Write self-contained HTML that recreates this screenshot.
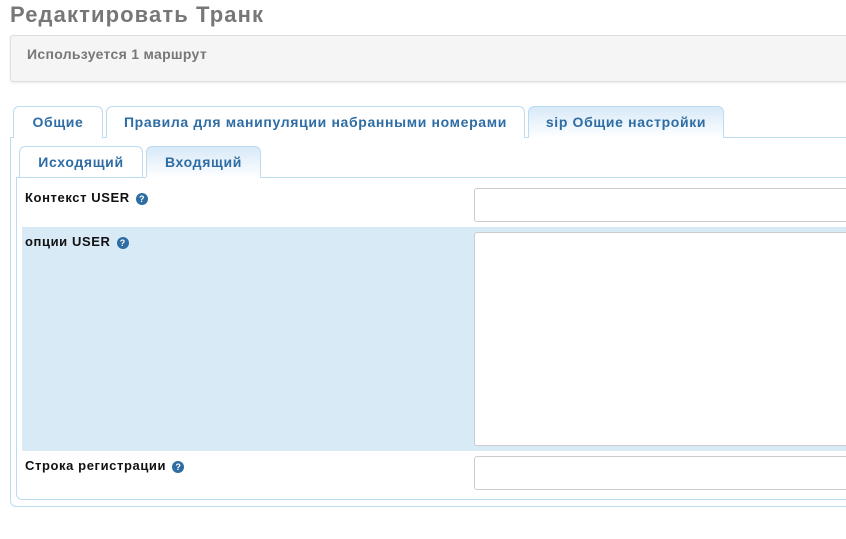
<!DOCTYPE html>
<html><head><meta charset="utf-8"><style>
*{box-sizing:border-box;margin:0;padding:0}
body{width:846px;height:539px;overflow:hidden;background:#fff;font-family:"Liberation Sans",sans-serif;position:relative}
.a{position:absolute}
.title{left:10px;top:2px;font-size:22px;font-weight:bold;color:#777;letter-spacing:1.1px}
.well{left:10px;top:35px;width:850px;height:47px;background:#f5f5f5;border:1px solid #ddd;border-radius:3px;box-shadow:0 1px 2px rgba(0,0,0,.08)}
.well span{position:absolute;left:16px;top:10px;font-size:14px;font-weight:bold;color:#777;letter-spacing:.3px}
.tab{position:absolute;border:1px solid #bcdcf2;border-bottom:none;border-radius:6px 6px 0 0;background:#fff;color:#2e6da4;font-weight:bold;font-size:14px;text-align:center;line-height:31px;letter-spacing:.65px}
.act{background:linear-gradient(#d7e9f8,#fff)}
.panel{position:absolute;border:1px solid #bcdcf2;border-radius:0 0 6px 6px}
.lbl{position:absolute;font-size:13px;font-weight:bold;color:#111;letter-spacing:.6px}
.q{display:inline-block;width:12px;height:12px;border-radius:50%;background:#2e6da4;color:#fff;font-size:9px;line-height:12px;text-align:center;vertical-align:0;margin-left:6px;letter-spacing:0}
.inp{position:absolute;left:474px;width:380px;border:1px solid #ccc;border-radius:3px;background:#fff}
</style></head><body>
<div class="a title">Редактировать Транк</div>
<div class="a well"><span>Используется 1 маршрут</span></div>
<div class="panel" style="left:10px;top:137px;width:850px;height:370px"></div>
<div class="tab" style="left:13px;top:106px;width:90px;height:32px">Общие</div>
<div class="tab" style="left:106px;top:106px;width:419px;height:32px">Правила для манипуляции набранными номерами</div>
<div class="tab act" style="left:528px;top:106px;width:196px;height:32px">sip Общие настройки</div>
<div class="panel" style="left:16px;top:177px;width:840px;height:323px"></div>
<div class="tab" style="left:19px;top:146px;width:124px;height:31px">Исходящий</div>
<div class="tab act" style="left:146px;top:146px;width:115px;height:32px">Входящий</div>
<div class="a" style="left:17px;top:177px;width:840px;height:1px;background:#bcdcf2"></div>
<div class="a" style="left:146px;top:177px;width:114px;height:1px;background:#fff"></div>
<div class="lbl" style="left:25px;top:190px">Контекст USER<span class="q">?</span></div>
<div class="inp" style="top:188px;height:34px"></div>
<div class="a" style="left:22px;top:227px;width:830px;height:224px;background:#d9eaf7"></div>
<div class="lbl" style="left:25px;top:234px">опции USER<span class="q">?</span></div>
<div class="inp" style="top:232px;height:214px"></div>
<div class="lbl" style="left:25px;top:458px">Строка регистрации<span class="q">?</span></div>
<div class="inp" style="top:456px;height:34px"></div>
</body></html>
